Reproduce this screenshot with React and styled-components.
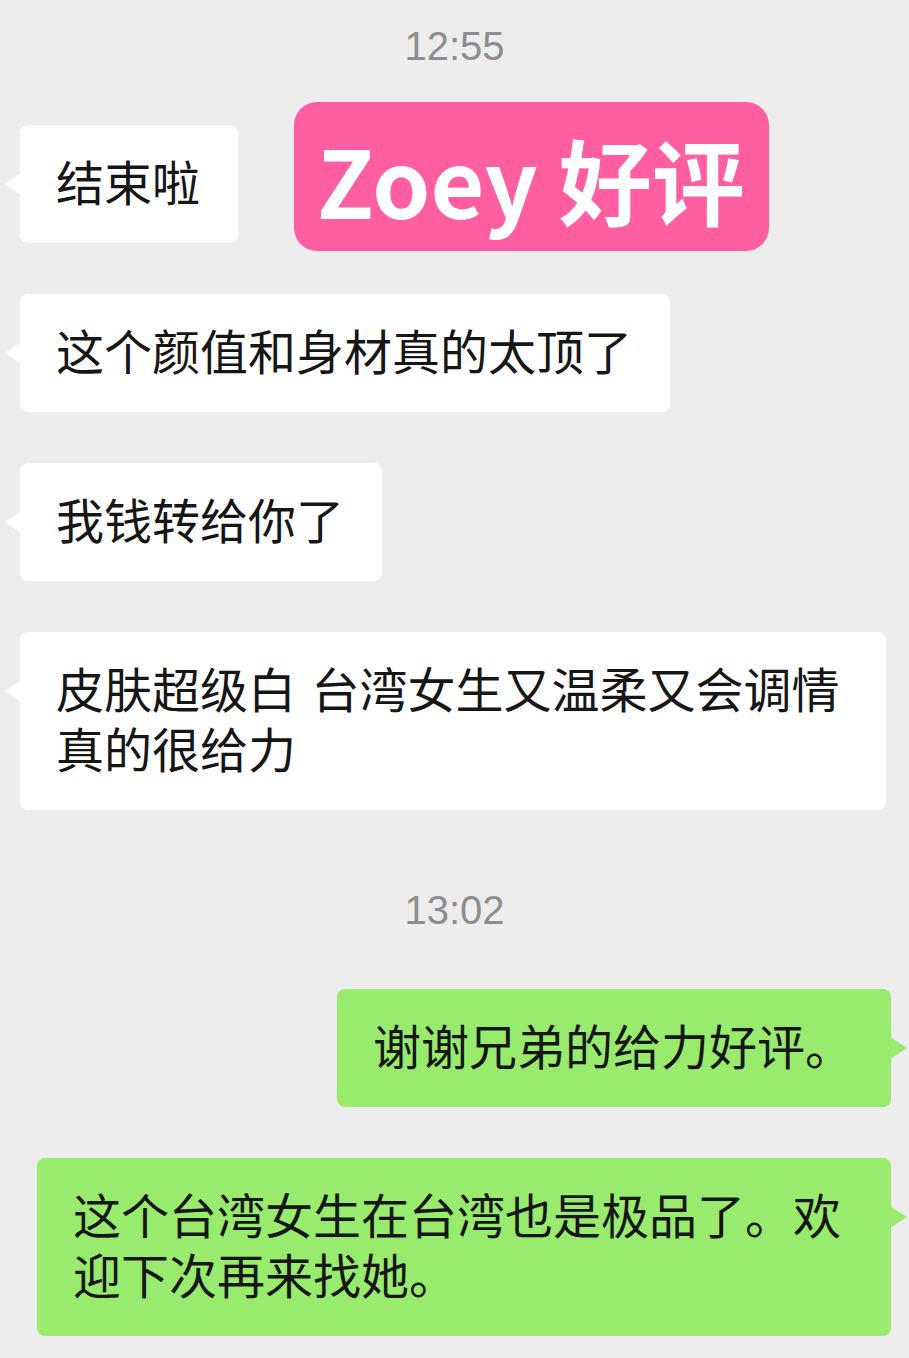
import React from 'react';
import styled, { createGlobalStyle, css } from 'styled-components';

const GlobalStyle = createGlobalStyle`
  html, body {
    margin: 0;
    padding: 0;
    background-color: #ededed;
  }
  body {
    font-family: "Noto Sans CJK SC", "Noto Sans", sans-serif;
  }
`;

const ChatWrapper = styled.main`
  width: 909px;
  height: 1358px;
  box-sizing: border-box;
  padding-top: 21px;
  display: flex;
  flex-direction: column;
  gap: 51px;
  background-color: #ededed;
  overflow: hidden;
`;

const TimeStamp = styled.div`
  height: 50px;
  line-height: 50px;
  margin: 24px 0 3px;
  text-align: center;
  font-family: "Liberation Sans", Arial, sans-serif;
  font-size: 40px;
  color: #8d8d8d;
  &:first-child {
    margin-top: 0;
  }
`;

const MessageRow = styled.div`
  position: relative;
  display: flex;
  justify-content: ${(p) => (p.$self ? 'flex-end' : 'flex-start')};
  padding: ${(p) => (p.$self ? '0 18px 0 37px' : '0 23px 0 20px')};
`;

const Bubble = styled.div`
  position: relative;
  padding: 25px 38px 33px 36px;
  border-radius: 8px;
  font-size: 48px;
  line-height: 60px;
  word-spacing: 0.1em;
  color: #161616;
  background-color: ${(p) => (p.$self ? '#98eb6d' : '#ffffff')};

  &::before {
    content: '';
    position: absolute;
    top: 48px;
    width: 0;
    height: 0;
    border-top: 11px solid transparent;
    border-bottom: 11px solid transparent;
    ${(p) =>
      p.$self
        ? css`
            right: -16px;
            border-left: 17px solid #98eb6d;
          `
        : css`
            left: -15px;
            border-right: 16px solid #ffffff;
          `}
  }
`;

const ReviewBadge = styled.div`
  position: absolute;
  top: -23px;
  left: 294px;
  width: 475px;
  height: 149px;
  box-sizing: border-box;
  padding: 4px 0 0 23px;
  display: flex;
  align-items: center;
  border-radius: 23px;
  background-color: #ff5ea1;
  color: #fff;
  font-size: 93px;
  font-weight: 700;
  white-space: nowrap;
`;

const messages = [
  { type: 'time', text: '12:55' },
  { type: 'msg', text: '结束啦', badge: 'Zoey 好评' },
  { type: 'msg', text: '这个颜值和身材真的太顶了' },
  { type: 'msg', text: '我钱转给你了' },
  { type: 'msg', text: '皮肤超级白 台湾女生又温柔又会调情真的很给力' },
  { type: 'time', text: '13:02' },
  { type: 'msg', self: true, text: '谢谢兄弟的给力好评。' },
  { type: 'msg', self: true, text: '这个台湾女生在台湾也是极品了。欢迎下次再来找她。' },
];

const App = () => {
  return (
    <>
      <GlobalStyle />
      <ChatWrapper>
        {messages.map((item, i) =>
          item.type === 'time' ? (
            <TimeStamp key={i}>{item.text}</TimeStamp>
          ) : (
            <MessageRow key={i} $self={item.self}>
              <Bubble $self={item.self}>{item.text}</Bubble>
              {item.badge && <ReviewBadge>{item.badge}</ReviewBadge>}
            </MessageRow>
          )
        )}
      </ChatWrapper>
    </>
  );
};

export default App;
